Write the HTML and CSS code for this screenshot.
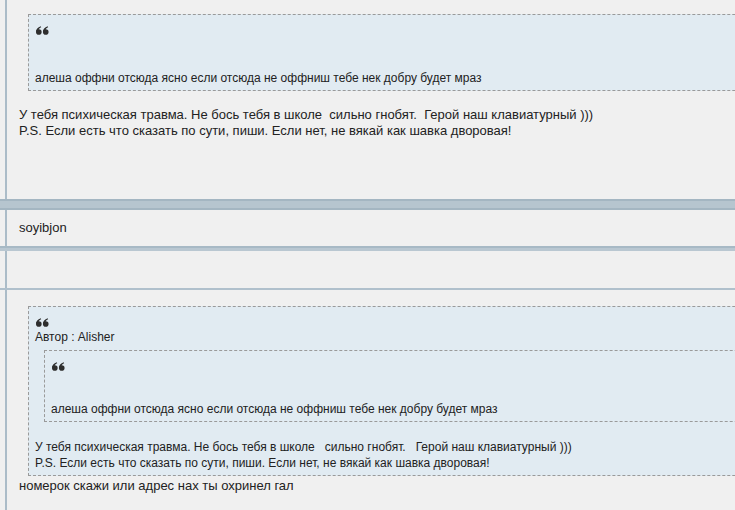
FILE: index.html
```html
<!DOCTYPE html>
<html lang="ru">
<head>
<meta charset="utf-8">
<title>Форум</title>
<link rel="stylesheet" href="styles.css">
</head>
<body>
<div class="page">
  <div class="cell post post-first">
    <div class="quote quote-first">
      <div class="qmark"><svg width="13" height="9" viewBox="0 0 12 8"><g fill="#2e2e2e"><circle cx="2.6" cy="5.4" r="2.6"/><path d="M0 5.4 C0 2.8 1.6 0.8 4.4 0 L4.8 0.9 C3.3 1.6 2.5 2.6 2.4 3.6 Z"/><circle cx="9" cy="5.4" r="2.6"/><path d="M6.4 5.4 C6.4 2.8 8 0.8 10.8 0 L11.2 0.9 C9.7 1.6 8.9 2.6 8.8 3.6 Z"/></g></svg></div>
      <div class="qcite"></div>
      <div class="qtext qtext-first">алеша оффни отсюда ясно если отсюда не оффниш тебе нек добру будет мраз</div>
    </div>
    <div class="ptext ptext-first">У тебя психическая травма. Не бось тебя в школе&nbsp; сильно гнобят.&nbsp; Герой наш клавиатурный )))<br>P.S. Если есть что сказать по сути, пиши. Если нет, не вякай как шавка дворовая!</div>
  </div>
  <div class="band"></div>
  <div class="cell author">soyibjon</div>
  <div class="sep"></div>
  <div class="cell empty"></div>
  <div class="thin"></div>
  <div class="cell post post-second">
    <div class="quote">
      <div class="qmark"><svg width="13" height="9" viewBox="0 0 12 8"><g fill="#2e2e2e"><circle cx="2.6" cy="5.4" r="2.6"/><path d="M0 5.4 C0 2.8 1.6 0.8 4.4 0 L4.8 0.9 C3.3 1.6 2.5 2.6 2.4 3.6 Z"/><circle cx="9" cy="5.4" r="2.6"/><path d="M6.4 5.4 C6.4 2.8 8 0.8 10.8 0 L11.2 0.9 C9.7 1.6 8.9 2.6 8.8 3.6 Z"/></g></svg></div>
      <div class="qcite">Автор : Alisher</div>
      <div class="quote quote-inner">
        <div class="qmark"><svg width="13" height="9" viewBox="0 0 12 8"><g fill="#2e2e2e"><circle cx="2.6" cy="5.4" r="2.6"/><path d="M0 5.4 C0 2.8 1.6 0.8 4.4 0 L4.8 0.9 C3.3 1.6 2.5 2.6 2.4 3.6 Z"/><circle cx="9" cy="5.4" r="2.6"/><path d="M6.4 5.4 C6.4 2.8 8 0.8 10.8 0 L11.2 0.9 C9.7 1.6 8.9 2.6 8.8 3.6 Z"/></g></svg></div>
        <div class="qcite"></div>
        <div class="qtext qtext-inner">алеша оффни отсюда ясно если отсюда не оффниш тебе нек добру будет мраз</div>
      </div>
      <div class="qtext qtext-outer">У тебя психическая травма. Не бось тебя в школе&nbsp;&nbsp; сильно гнобят.&nbsp;&nbsp; Герой наш клавиатурный )))<br>P.S. Если есть что сказать по сути, пиши. Если нет, не вякай как шавка дворовая!</div>
    </div>
    <div class="ptext ptext-second">номерок скажи или адрес нах ты охринел гал</div>
  </div>
</div>
</body>
</html>
```

FILE: styles.css
```css
html, body {
  margin: 0;
  padding: 0;
  overflow: hidden;
  background: #f0f0f0;
}

body {
  font-family: "Liberation Sans", Arial, sans-serif;
  font-size: 12px;
  line-height: 16px;
  color: #222;
}

.page {
  width: 1000px;
}

.cell {
  margin-left: 5px;
  border-left: 2px solid #abbcc8;
  padding-left: 12px;
  background: #f0f0f0;
}

.post-first {
  height: 185px;
  padding-top: 14px;
}

.band {
  height: 7px;
  background: #b6c5cf;
  border-top: 2px solid #a4b6c2;
  border-bottom: 2px solid #a4b6c2;
}

.author {
  height: 36px;
  display: flex;
  align-items: center;
  font-size: 13px;
}

.sep {
  height: 3px;
  background: #b9c7d1;
  border-top: 2px solid #a7b9c5;
}

.empty {
  height: 37px;
}

.thin {
  height: 2px;
  background: #b0c0cc;
}

.post-second {
  padding-top: 16px;
  height: 204px;
}

.quote {
  margin-left: 9px;
  border: 1px dashed #9a9a9a;
  background: #e1ebf2;
  padding: 9px 6px 4px;
}

.quote-inner {
  margin-top: 5px;
}

.qmark {
  height: 11px;
  padding: 2px 0 0 1px;
}

.qmark svg {
  display: block;
}

.qcite {
  min-height: 16px;
}

.qtext-first {
  margin-top: 17px;
}

.qtext-inner {
  margin-top: 12px;
}

.qtext-outer {
  margin-top: 17px;
}

.ptext {
  font-size: 13px;
}

.ptext-first {
  margin-top: 16px;
}

.ptext-second {
  margin-top: 2px;
}
```
